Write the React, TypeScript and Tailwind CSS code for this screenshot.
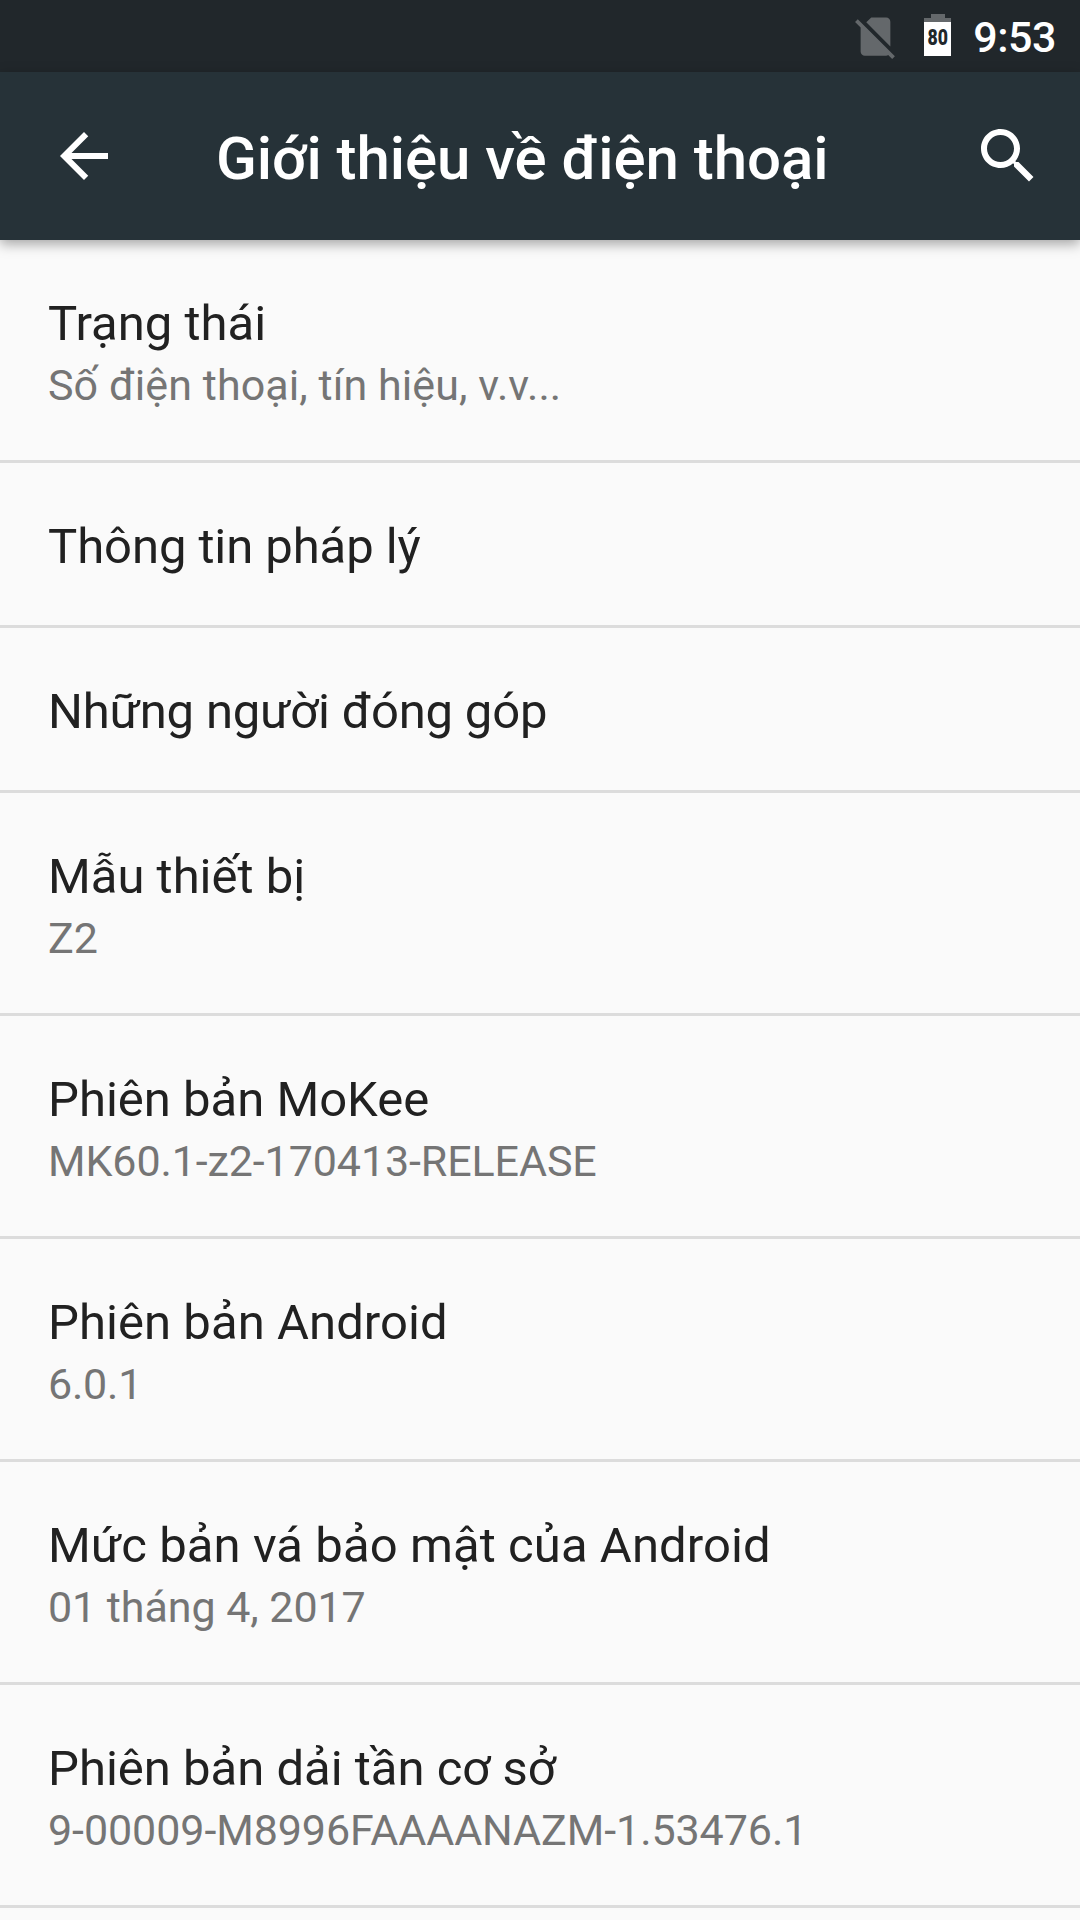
type Item = { title: string; titleClass?: string; summary?: string; summaryClass?: string };

const ITEMS: Item[] = [
  { title: "Trạng thái", summary: "Số điện thoại, tín hiệu, v.v...", summaryClass: "tracking-[0.08px]" },
  { title: "Thông tin pháp lý", titleClass: "tracking-[-0.08px]" },
  { title: "Những người đóng góp", titleClass: "tracking-[-0.18px]" },
  { title: "Mẫu thiết bị", summary: "Z2" },
  { title: "Phiên bản MoKee", summary: "MK60.1-z2-170413-RELEASE", summaryClass: "tracking-[-0.1px]" },
  { title: "Phiên bản Android", titleClass: "tracking-[0.06px]", summary: "6.0.1", summaryClass: "tracking-[-0.2px]" },
  {
    title: "Mức bản vá bảo mật của Android",
    titleClass: "tracking-[0.08px]",
    summary: "01 tháng 4, 2017",
    summaryClass: "tracking-[-0.06px]",
  },
  {
    title: "Phiên bản dải tần cơ sở",
    summary: "9-00009-M8996FAAAANAZM-1.53476.1",
    summaryClass: "tracking-[-0.07px]",
  },
];

export default function App() {
  return (
    <main className="flex h-[1920px] w-[1080px] flex-col overflow-hidden bg-[#fafafa] font-['Roboto',sans-serif]">
      <StatusBar />
      <Toolbar />
      <ul>
        {ITEMS.map((item) => (
          <li
            key={item.title}
            className={`flex flex-col border-b-3 border-[#dcdcdc] pt-[51px] pl-12 ${
              item.summary ? "h-[223px]" : "h-[165px]"
            }`}
          >
            <span className={`text-[49px] leading-[66px] whitespace-nowrap text-[#212121] ${item.titleClass ?? ""}`}>
              {item.title}
            </span>
            {item.summary && (
              <span className={`text-[43px] leading-[57px] whitespace-nowrap text-[#757575] ${item.summaryClass ?? ""}`}>
                {item.summary}
              </span>
            )}
          </li>
        ))}
      </ul>
    </main>
  );
}

function StatusBar() {
  return (
    <div className="flex h-[72px] shrink-0 items-center justify-end bg-[#21272b] pr-6">
      {/* No SIM */}
      <svg className="mr-[23px] size-[51px]" viewBox="0 0 24 24" fill="#64686b">
        <path d="M18.99 5c0-1.1-.89-2-1.99-2h-7L7.66 5.34 19 16.68 18.99 5zM3.65 3.88L2.38 5.15 5 7.77V19c0 1.1.9 2 2 2h10.01c.35 0 .67-.1.96-.26l1.88 1.88 1.27-1.27L3.65 3.88z" />
      </svg>
      {/* Battery */}
      <div className="mt-[-2px] mr-[22px] flex flex-col items-center">
        <div className="h-1 w-[14px] bg-[#64686b]" />
        <div className="h-1 w-[27px] bg-[#64686b]" />
        <div className="flex h-[34px] w-[27px] items-center justify-center bg-white pb-[2px] text-[#21272b]">
          <span className="scale-x-[0.8] text-[22px] leading-none font-black">80</span>
        </div>
      </div>
      <span className="mt-[3px] text-[43px] font-medium tracking-[-0.5px] text-white">9:53</span>
    </div>
  );
}

function Toolbar() {
  return (
    <header className="z-10 flex h-[168px] shrink-0 items-center bg-[#263238] shadow-[0_4px_12px_rgba(0,0,0,0.35)]">
      <svg className="ml-12 size-[72px]" viewBox="0 0 24 24" fill="white">
        <path d="M20 11H7.83l5.59-5.59L12 4l-8 8 8 8 1.41-1.41L7.83 13H20v-2z" />
      </svg>
      <h1 className="mt-[5px] ml-24 grow text-[60px] font-medium tracking-[-0.07px] whitespace-nowrap text-white">
        Giới thiệu về điện thoại
      </h1>
      <svg className="mr-9 size-[72px]" viewBox="0 0 24 24" fill="white">
        <path d="M15.5 14h-.79l-.28-.27C15.41 12.59 16 11.11 16 9.5 16 5.91 13.09 3 9.5 3S3 5.91 3 9.5 5.91 16 9.5 16c1.61 0 3.09-.59 4.23-1.57l.27.28v.79l5 4.99L20.49 19l-4.99-5zm-6 0C7.01 14 5 11.99 5 9.5S7.01 5 9.5 5 14 7.01 14 9.5 11.99 14 9.5 14z" />
      </svg>
    </header>
  );
}
